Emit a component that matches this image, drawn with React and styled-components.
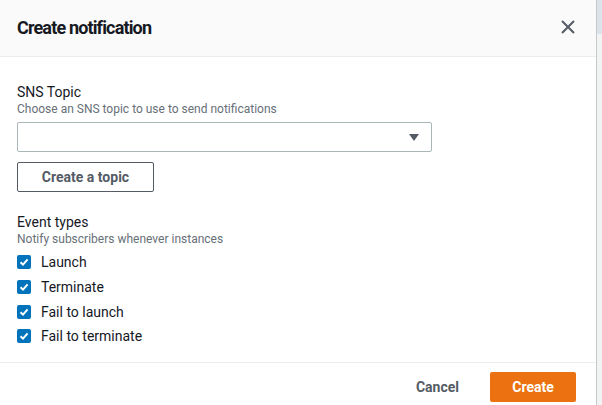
import React, { useState } from 'react';
import styled, { createGlobalStyle } from 'styled-components';

const GlobalStyle = createGlobalStyle`
  html, body {
    margin: 0;
    padding: 0;
    background: #eaeded;
    font-family: Roboto, "Noto Sans", Arial, sans-serif;
    color: #16191f;
  }
`;

const Page = styled.div`
  width: 602px;
  height: 405px;
  display: flex;
  overflow: hidden;
  background: linear-gradient(#dbe4ea 0, #dbe4ea 34px, #f2f3f3 34px);
`;

const Modal = styled.div`
  width: 597px;
  height: 405px;
  background: #ffffff;
  border-right: 1px solid #c6c9cc;
  box-sizing: border-box;
  display: flex;
  flex-direction: column;
`;

const Header = styled.div`
  height: 57px;
  flex-shrink: 0;
  box-sizing: border-box;
  background: #fafafa;
  border-bottom: 1px solid #eaeded;
  display: flex;
  align-items: center;
  justify-content: space-between;
  padding: 0 18px 2px 17px;
`;

const Title = styled.h2`
  margin: 0;
  font-size: 18px;
  font-weight: 700;
  letter-spacing: -0.85px;
  color: #16191f;
`;

const CloseButton = styled.button`
  border: none;
  background: none;
  padding: 0;
  width: 20px;
  height: 20px;
  display: flex;
  align-items: center;
  justify-content: center;
  cursor: pointer;
`;

const Body = styled.div`
  flex: 1;
  padding: 26px 17px 0 17px;
  display: flex;
  flex-direction: column;
`;

const Field = styled.div`
  display: flex;
  flex-direction: column;
  margin-top: ${({ top }) => top || 0}px;
`;

const Label = styled.div`
  font-size: 14px;
  line-height: 18px;
  color: #16191f;
`;

const Description = styled.div`
  font-size: 12px;
  line-height: 16px;
  color: #687078;
  margin-bottom: ${({ gap }) => gap || 0}px;
`;

const SelectBox = styled.div`
  width: 415px;
  height: 30px;
  box-sizing: border-box;
  border: 1px solid #aab7b8;
  border-radius: 2px;
  display: flex;
  align-items: center;
  justify-content: flex-end;
  padding-right: 12px;
  margin-bottom: 10px;
`;

const Arrow = styled.div`
  width: 0;
  height: 0;
  border-left: 5px solid transparent;
  border-right: 5px solid transparent;
  border-top: 7px solid #545b64;
`;

const OutlineButton = styled.button`
  align-self: flex-start;
  width: 137px;
  height: 30px;
  box-sizing: border-box;
  border: 1px solid #545b64;
  border-radius: 2px;
  background: #ffffff;
  color: #545b64;
  font-family: inherit;
  font-size: 14px;
  font-weight: 700;
  cursor: pointer;
`;

const CheckList = styled.div`
  display: flex;
  flex-direction: column;
  gap: 6.8px;
  margin-top: 6px;
`;

const CheckRow = styled.label`
  display: flex;
  align-items: center;
  gap: 10px;
  height: 18px;
  font-size: 14px;
  color: #16191f;
  cursor: pointer;
`;

const Box = styled.span`
  width: 14px;
  height: 14px;
  border-radius: 2px;
  background: ${({ checked }) => (checked ? '#0073bb' : '#ffffff')};
  border: ${({ checked }) => (checked ? 'none' : '1px solid #aab7b8')};
  box-sizing: border-box;
  display: flex;
  align-items: center;
  justify-content: center;
`;

const Footer = styled.div`
  height: 43px;
  flex-shrink: 0;
  box-sizing: border-box;
  border-top: 1px solid #eaeded;
  display: flex;
  align-items: flex-start;
  justify-content: flex-end;
  gap: 31px;
  padding: 9px 20px 0 0;
`;

const TextButton = styled.button`
  border: none;
  background: none;
  height: 30px;
  font-family: inherit;
  font-size: 14px;
  font-weight: 700;
  color: #545b64;
  padding: 0;
  cursor: pointer;
`;

const PrimaryButton = styled.button`
  width: 86px;
  height: 30px;
  border: none;
  border-radius: 2px;
  background: #ec7211;
  color: #ffffff;
  font-family: inherit;
  font-size: 14px;
  font-weight: 700;
  cursor: pointer;
`;

const events = ['Launch', 'Terminate', 'Fail to launch', 'Fail to terminate'];

const App = () => {
  const [checked, setChecked] = useState(events.map(() => true));

  const toggle = (i) => {
    setChecked(checked.map((c, j) => (j === i ? !c : c)));
  };

  return (
    <Page>
      <GlobalStyle />
      <Modal>
        <Header>
          <Title>Create notification</Title>
          <CloseButton aria-label="Close">
            <svg width="14" height="14" viewBox="0 0 14 14">
              <path d="M1 1L13 13M13 1L1 13" stroke="#545b64" strokeWidth="2" />
            </svg>
          </CloseButton>
        </Header>
        <Body>
          <Field>
            <Label>SNS Topic</Label>
            <Description gap={5}>Choose an SNS topic to use to send notifications</Description>
            <SelectBox>
              <Arrow />
            </SelectBox>
            <OutlineButton>Create a topic</OutlineButton>
          </Field>
          <Field top={21}>
            <Label>Event types</Label>
            <Description>Notify subscribers whenever instances</Description>
            <CheckList>
              {events.map((ev, i) => (
                <CheckRow key={ev} onClick={() => toggle(i)}>
                  <Box checked={checked[i]}>
                    {checked[i] && (
                      <svg width="10" height="10" viewBox="0 0 10 10">
                        <path d="M1.5 5.2L4 7.6L8.6 2.4" fill="none" stroke="#fff" strokeWidth="2" />
                      </svg>
                    )}
                  </Box>
                  {ev}
                </CheckRow>
              ))}
            </CheckList>
          </Field>
        </Body>
        <Footer>
          <TextButton>Cancel</TextButton>
          <PrimaryButton>Create</PrimaryButton>
        </Footer>
      </Modal>
    </Page>
  );
};

export default App;
